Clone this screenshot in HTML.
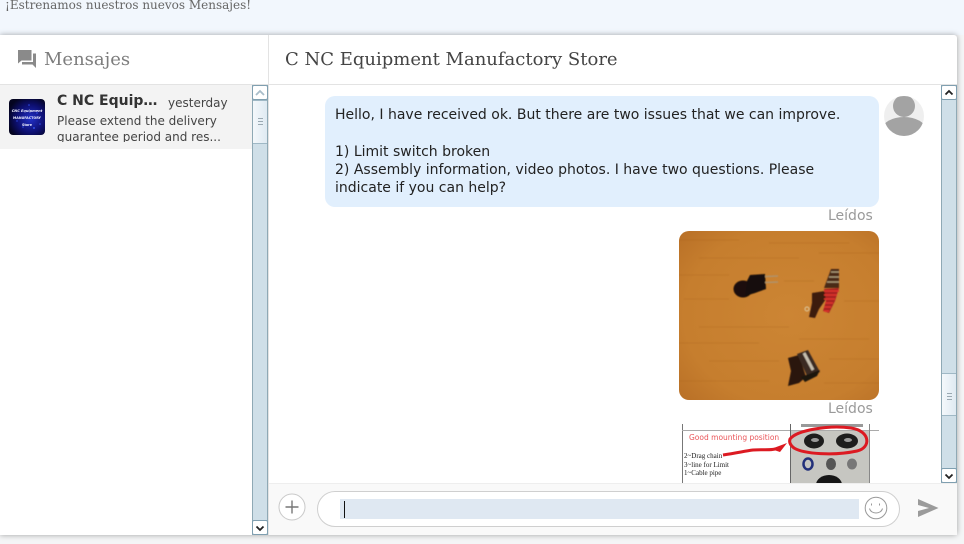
<!DOCTYPE html>
<html lang="es">
<head>
<meta charset="utf-8">
<title>Mensajes</title>
<style>
html,body{margin:0;padding:0;width:964px;height:544px;overflow:hidden;background:#f4f5f6;}
body{position:relative;font-family:"DejaVu Sans","Liberation Sans",sans-serif;color:#222;}
.a{position:absolute;box-sizing:border-box;}
.t{position:absolute;white-space:nowrap;}
.track{background:#cfdfe8;border-left:1px solid #8fa9b5;border-right:1px solid #8fa9b5;}
.btn{background:#fff;border:1px solid #7f9fb0;border-radius:2px;}
.thumb{background:linear-gradient(90deg,#f4f8fb,#dfeaf2);border:1px solid #9fb8c5;border-left:0;border-right:0;}
.grip{position:absolute;left:5px;width:5px;height:1px;background:#9aa9b2;}
</style>
</head>
<body>
<div class="a" style="left:0;top:0;width:964px;height:35px;background:#f2f7fd;"></div>
<div class="t" style="left:5px;top:-3px;font:12px/16px 'DejaVu Serif',serif;color:#666;">¡Estrenamos nuestros nuevos Mensajes!</div>

<!-- card -->
<div class="a" style="left:0;top:35px;width:957px;height:500px;background:#fff;box-shadow:0 0 6px rgba(0,0,0,.35);border-radius:0 3px 3px 0;"></div>
<div class="a" style="left:268px;top:35px;width:1px;height:500px;background:#e3e3e3;"></div>
<div class="a" style="left:0;top:84px;width:957px;height:1px;background:#e3e3e3;"></div>

<!-- header -->
<svg class="a" style="left:17px;top:49px;" width="20" height="20" viewBox="0 0 20 20"><path d="M1 1H14.500V11.500H4.500L1 14.500Z" fill="#8a8a8a"/><path d="M16 4.500H19V19L15.500 15.500H5V13H16Z" fill="#8a8a8a"/></svg>
<div class="t" style="left:44px;top:48px;font:18px/23px 'DejaVu Serif',serif;color:#7d7d7d;">Mensajes</div>
<div class="t" style="left:285px;top:48px;font:18px/24px 'DejaVu Serif',serif;color:#444;">C NC Equipment Manufactory Store</div>

<!-- conversation item -->
<div class="a" style="left:0;top:85px;width:252px;height:64px;background:#f3f3f3;"></div>
<svg class="a" style="left:9px;top:99px;" width="36" height="36" viewBox="0 0 36 36">
<defs><radialGradient id="g1" cx=".6" cy=".55" r=".65"><stop offset="0" stop-color="#2230c8"/><stop offset=".6" stop-color="#0d0f70"/><stop offset="1" stop-color="#04041f"/></radialGradient></defs>
<rect width="36" height="36" rx="4" fill="url(#g1)"/>
<g fill="#3a5cff" opacity=".8"><circle cx="20" cy="6" r=".8"/><circle cx="28" cy="14" r=".8"/><circle cx="14" cy="28" r=".8"/><circle cx="25" cy="29" r="1"/><circle cx="31" cy="25" r=".8"/><circle cx="8" cy="22" r=".7"/></g>
<g fill="#eef0ff" font-family="'DejaVu Sans',sans-serif" font-weight="bold" text-anchor="middle">
<text x="18" y="13" font-size="3.500" font-style="italic">CNC Equipment</text>
<text x="18" y="20" font-size="3.300">MANUFACTORY</text>
<text x="18" y="27" font-size="3.300">Store</text>
</g>
</svg>
<div class="t" style="left:57px;top:93px;font:bold 14px/17px 'DejaVu Sans',sans-serif;color:#333;">C NC Equip…</div>
<div class="t" style="left:168px;top:95px;font:12px/16px 'DejaVu Sans',sans-serif;color:#444;">yesterday</div>
<div class="t" style="left:57px;top:113px;font:12px/16px 'DejaVu Sans',sans-serif;color:#444;">Please extend the delivery</div>
<div class="a" style="left:57px;top:129px;width:190px;height:13px;overflow:hidden;"><div class="t" style="left:0;top:0;font:12px/16px 'DejaVu Sans',sans-serif;color:#444;">guarantee period and res...</div></div>

<!-- left scrollbar -->
<div class="a track" style="left:252px;top:85px;width:16px;height:450px;"></div>
<div class="a thumb" style="left:253px;top:100px;width:14px;height:44px;"><div class="grip" style="top:17px"></div><div class="grip" style="top:20px"></div><div class="grip" style="top:23px"></div></div>
<div class="a btn" style="left:252px;top:85px;width:16px;height:15px;"><svg class="a" style="left:2px;top:3px" width="10" height="7" viewBox="0 0 10 7"><path d="M1 6L5 2L9 6" fill="none" stroke="#a9bdc9" stroke-width="1.800"/></svg></div>
<div class="a btn" style="left:252px;top:520px;width:16px;height:15px;"><svg class="a" style="left:2px;top:4px" width="10" height="7" viewBox="0 0 10 7"><path d="M1.500 1.500L5 5L8.500 1.500" fill="none" stroke="#222" stroke-width="1.800"/></svg></div>

<!-- messages -->
<div class="a" style="left:325px;top:96px;width:554px;height:111px;background:#e1effd;border-radius:10px;"></div>
<div class="t" style="left:335px;top:105px;font:14px/18.300px 'DejaVu Sans',sans-serif;color:#222;padding-top:1px;">Hello, I have received ok. But there are two issues that we can improve.<br><br>1) Limit switch broken<br>2) Assembly information, video photos. I have two questions. Please<br>indicate if you can help?</div>

<svg class="a" style="left:884px;top:96px;" width="40" height="40" viewBox="0 0 40 40">
<defs><clipPath id="c1"><circle cx="20" cy="20" r="20"/></clipPath></defs>
<circle cx="20" cy="20" r="20" fill="#efefef"/>
<g clip-path="url(#c1)"><circle cx="20" cy="10" r="11" fill="#a3a3a3"/><ellipse cx="20" cy="34" rx="22" ry="13" fill="#a3a3a3"/></g>
</svg>

<div class="t" style="left:828px;top:208px;font:14px/17px 'DejaVu Sans',sans-serif;color:#9a9a9a;">Leídos</div>

<!-- photo 1 -->
<svg class="a" style="left:679px;top:231px;" width="200" height="169" viewBox="0 0 200 169">
<defs>
<clipPath id="c2"><rect width="200" height="169" rx="10"/></clipPath>
<radialGradient id="w" cx=".55" cy=".5" r=".75"><stop offset="0" stop-color="#cc8534"/><stop offset=".7" stop-color="#c67e2e"/><stop offset="1" stop-color="#b86f26"/></radialGradient>
<filter id="b2"><feGaussianBlur stdDeviation=".6"/></filter>
</defs>
<g clip-path="url(#c2)">
<rect width="200" height="169" fill="url(#w)"/>
<g stroke="#a9641f" stroke-width="1" opacity=".3" filter="url(#b2)">
<path d="M0 9H60M90 12H170M20 27H120M140 22H200M0 44H50M105 50H135M5 68H50M165 70H200M20 96H110M0 112H80M120 108H190M30 130H100M150 128H200M0 150H90M145 152H200"/>
</g>
<g filter="url(#b2)">
<ellipse cx="64" cy="58" rx="9.500" ry="8.500" fill="#1f0e07"/>
<path d="M68 50L71 44L86 43L87 58L76 62L66 65Z" fill="#170c07"/>
<path d="M86 45.500L99 45M86 51.500L99 51" stroke="#b0926a" stroke-width="1.500"/>
<path d="M133 62L146 60L147 68L140 78L136 87L130 86L133 72Z" fill="#3d1a0c"/>
<path d="M145 58L160 57L156 70L150 82L144 80L147 70Z" fill="#a82420"/>
<path d="M152 38L160 38L160 57L145 57Z" fill="#4a2a18"/>
<g stroke-width="1.400">
<g stroke="#a89878"><path d="M152 41H160M150 46H160M148 51H160"/></g>
<g stroke="#e0352e"><path d="M145 60H160M145 64H158M145 68H156M146 72H154M145 76H152M145 80H150"/></g>
</g>
<circle cx="128" cy="78" r="2" fill="none" stroke="#ddc9a0"/>
<path d="M109 127L120 124L127 146L120 152L109 155L112 140Z" fill="#2a140a"/>
<path d="M118 123L129 119L141 141L129 147Z" fill="#3a2a22"/>
<path d="M125 122L134 139" stroke="#c6beae" stroke-width="3"/>
<path d="M122 146L141 139L138 145L126 151Z" fill="#1e1511"/>
</g>
</g>
</svg>

<div class="t" style="left:828px;top:401px;font:14px/17px 'DejaVu Sans',sans-serif;color:#9a9a9a;">Leídos</div>

<!-- photo 2 -->
<div class="a" style="left:679px;top:424px;width:200px;height:59px;overflow:hidden;background:#fff;">
<div class="a" style="left:112px;top:7px;width:78px;height:52px;background:#c6c6c1;"></div>
<div class="a" style="left:3px;top:0;width:1px;height:59px;background:#777;"></div>
<div class="a" style="left:3px;top:6px;width:197px;height:1px;background:#aaa;"></div>
<div class="a" style="left:111px;top:0;width:1px;height:59px;background:#666;"></div>
<div class="a" style="left:190px;top:0;width:1px;height:59px;background:#888;"></div>
<div class="a" style="left:122px;top:0;width:62px;height:3px;background:#999;"></div>
<div class="t" style="left:10px;top:8px;font:7.500px/11px 'DejaVu Sans',sans-serif;color:#ea5559;">Good mounting position</div>
<div class="t" style="left:5px;top:28px;font:7px/8.500px 'Liberation Serif',serif;color:#222;">2~Drag chain<br>3~line for Limit<br>1~Cable pipe</div>
<svg class="a" style="left:0;top:0;" width="200" height="59" viewBox="0 0 200 59">
<ellipse cx="135" cy="17" rx="10" ry="7.500" fill="#1d1d1d"/><ellipse cx="136" cy="16" rx="4" ry="2" fill="#999"/>
<ellipse cx="168" cy="17" rx="11" ry="7.500" fill="#1d1d1d"/><ellipse cx="169" cy="16" rx="4" ry="2" fill="#999"/>
<ellipse cx="129" cy="40" rx="4.500" ry="5.500" fill="none" stroke="#22307a" stroke-width="2.500"/>
<ellipse cx="152" cy="40" rx="5" ry="6" fill="#555"/>
<ellipse cx="173" cy="40" rx="5" ry="5.500" fill="#777"/>
<ellipse cx="150" cy="61" rx="13" ry="10" fill="#151515"/>
<path d="M44 31C58 29 66 27 74 26C84 25 92 27 100 24" fill="none" stroke="#dc1a22" stroke-width="3"/>
<path d="M92 25L108 19L101 28Z" fill="#dc1a22"/>
<path d="M111 15C118 6 150 1 172 4C192 7 192 24 178 27C155 32 125 30 115 24C111 21 110 18 111 15Z" fill="none" stroke="#dc1a22" stroke-width="3"/>
</svg>
</div>

<!-- right scrollbar -->
<div class="a track" style="left:941px;top:85px;width:16px;height:398px;"></div>
<div class="a thumb" style="left:942px;top:373px;width:14px;height:43px;"><div class="grip" style="top:19px"></div><div class="grip" style="top:22px"></div><div class="grip" style="top:25px"></div></div>
<div class="a btn" style="left:941px;top:85px;width:16px;height:15px;"><svg class="a" style="left:2px;top:3px" width="10" height="7" viewBox="0 0 10 7"><path d="M1.500 5.500L5 2L8.500 5.500" fill="none" stroke="#222" stroke-width="1.800"/></svg></div>
<div class="a btn" style="left:941px;top:468px;width:16px;height:15px;"><svg class="a" style="left:2px;top:4px" width="10" height="7" viewBox="0 0 10 7"><path d="M1.500 1.500L5 5L8.500 1.500" fill="none" stroke="#222" stroke-width="1.800"/></svg></div>

<!-- footer -->
<div class="a" style="left:269px;top:483px;width:688px;height:52px;background:#f9f9f9;border-top:1px solid #eee;"></div>
<svg class="a" style="left:278px;top:493px;" width="28" height="28" viewBox="0 0 28 28"><circle cx="14" cy="14" r="13" fill="#fff" stroke="#c9c9c9"/><path d="M14 7.500V20.500M7.500 14H20.500" stroke="#777" stroke-width="1.400"/></svg>
<div class="a" style="left:317px;top:491px;width:583px;height:36px;background:#fff;border:1px solid #cfcfcf;border-radius:18px;"></div>
<div class="a" style="left:340px;top:499px;width:519px;height:20px;background:#dfe8f2;"></div>
<div class="a" style="left:344px;top:501px;width:1px;height:17px;background:#111;"></div>
<svg class="a" style="left:864px;top:496px;" width="24" height="24" viewBox="0 0 24 24"><circle cx="12" cy="12" r="10.800" fill="none" stroke="#999" stroke-width="1"/><path d="M7.500 9.500V7.500M15.500 9.500V7.500" stroke="#999" stroke-width="1"/><path d="M5.500 12.500C7 18.500 17 18.500 18.500 12.500" fill="none" stroke="#999" stroke-width="1"/></svg>
<svg class="a" style="left:917px;top:498px;" width="23" height="20" viewBox="0 0 23 20"><path d="M1 1L21.500 10L1 19L1 13L12 10L1 7Z" fill="#9b9b9b"/></svg>
</body>
</html>
